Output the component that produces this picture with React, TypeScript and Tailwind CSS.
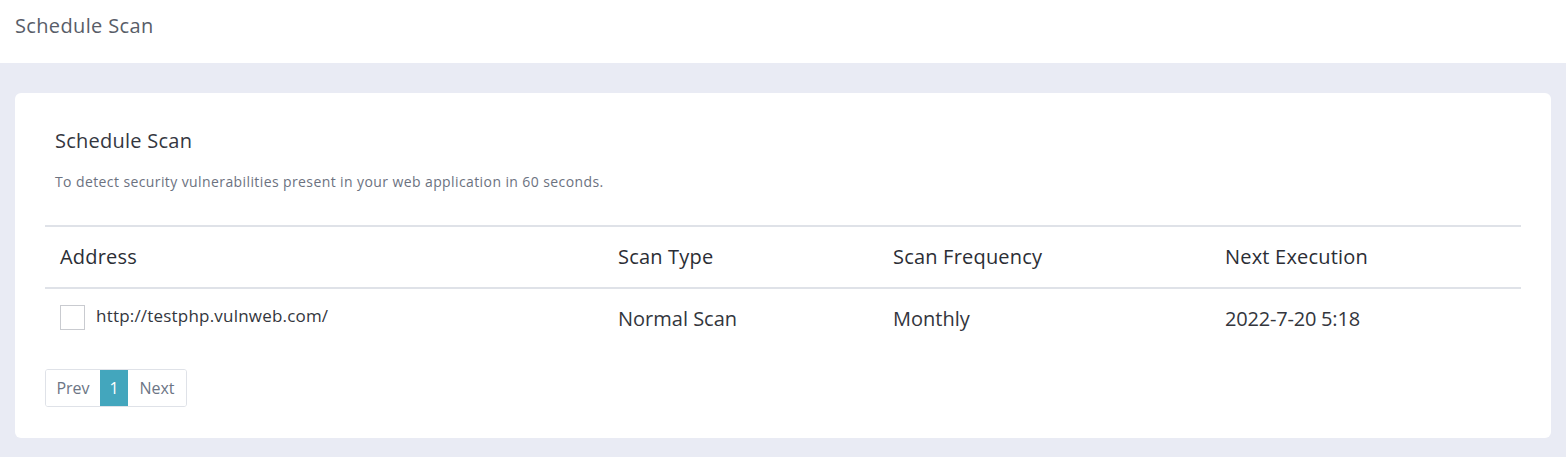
export default function App() {
  return (
    <div className="min-h-[457px] bg-[#e9ebf4] font-['Open_Sans',sans-serif]">
      {/* Header */}
      <div className="h-[63px] bg-white px-[15px] pt-[13px]">
        <h1 className="text-[20px] leading-[26px] text-[#585d68] font-normal tracking-[0.35px]">Schedule Scan</h1>
      </div>

      {/* Content */}
      <div className="px-[15px] pt-[30px] pb-[19px]">
        <div className="bg-white rounded-[6px] px-[30px] pt-[35px] pb-[31px]">
          <div className="px-[10px]">
            <h2 className="text-[20px] leading-[26px] text-[#34373f] tracking-[0.25px]">Schedule Scan</h2>
            <p className="text-[14px] text-[#6c727f] mt-[19px] leading-[18px] tracking-[0.4px]">
              To detect security vulnerabilities present in your web application in 60 seconds.
            </p>
          </div>

          {/* Table */}
          <div className="mt-[34px]">
            <div className="grid grid-cols-[558px_275px_332px_1fr] h-[64px] items-center border-t-2 border-b-2 border-[#dfe2e8] text-[20px] tracking-[0.2px] font-medium text-[#2b2e35]">
              <div className="px-[15px]">Address</div>
              <div className="px-[15px]">Scan Type</div>
              <div className="px-[15px]">Scan Frequency</div>
              <div className="px-[15px]">Next Execution</div>
            </div>
            <div className="grid grid-cols-[558px_275px_332px_1fr] h-[60px] items-center text-[20px] text-[#33363d]">
              <div className="px-[15px] flex items-center gap-[11px] -mt-[4px]">
                <span className="w-[25px] h-[25px] border border-[#c9cbd0] bg-white shrink-0" />
                <span className="text-[17px] tracking-[0.2px] -mt-[2px]">http://testphp.vulnweb.com/</span>
              </div>
              <div className="px-[15px]">Normal Scan</div>
              <div className="px-[15px]">Monthly</div>
              <div className="px-[15px] -tracking-[0.2px]">2022-7-20 5:18</div>
            </div>
          </div>

          {/* Pagination */}
          <div className="mt-[20px] inline-flex border border-[#dfe2e8] rounded-[3px] h-[38px] overflow-hidden">
            <button className="w-[54px] text-[16px] text-[#6c7585] bg-white">Prev</button>
            <button className="w-[28px] text-[16px] text-white bg-[#43a6bd]">1</button>
            <button className="w-[58px] text-[16px] text-[#6c7585] bg-white">Next</button>
          </div>
        </div>
      </div>
    </div>
  );
}
